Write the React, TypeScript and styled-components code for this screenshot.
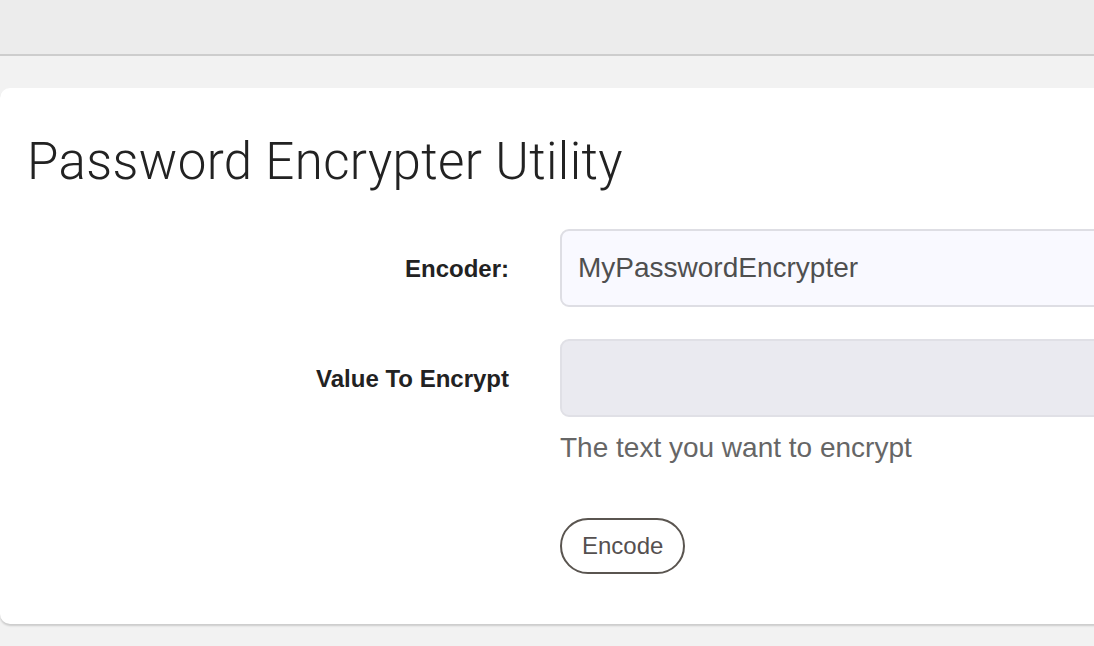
import React from "react";
import styled, { createGlobalStyle } from "styled-components";

const Global = createGlobalStyle`
  html, body { margin: 0; padding: 0; }
  body {
    background: #f2f2f2;
    font-family: "Liberation Sans", Arial, sans-serif;
    overflow: hidden;
    width: 1094px;
    height: 646px;
  }
`;

const TopBar = styled.header`
  height: 54px;
  background: #ececec;
  border-bottom: 2px solid #cdcdcd;
`;

const Main = styled.main`
  padding-top: 32px;
  overflow: hidden;
  padding-bottom: 6px;
`;

const Card = styled.section`
  width: 1200px;
  background: #ffffff;
  border-radius: 10px;
  box-shadow: 0 2px 2px rgba(0, 0, 0, 0.16);
  padding: 44px 0 50px 0;
  box-sizing: border-box;
`;

const Title = styled.h1`
  margin: 0 0 37px 27px;
  font-family: Roboto, "Liberation Sans", sans-serif;
  font-weight: 300;
  font-size: 51px;
  line-height: 60px;
  color: #222222;
  letter-spacing: 0.4px;
`;

const Form = styled.form`
  display: grid;
  grid-template-columns: 509px 1fr;
  column-gap: 51px;
  align-items: center;
`;

const Label = styled.label`
  justify-self: end;
  font-weight: 700;
  font-size: 24px;
  color: #222222;
  padding-top: 2px;
`;

const Input = styled.input<{ $muted?: boolean }>`
  box-sizing: border-box;
  height: 78px;
  width: 100%;
  border: 2px solid ${(p) => (p.$muted ? "#e0e0e6" : "#dedee4")};
  border-radius: 9px;
  background: ${(p) => (p.$muted ? "#eaeaf0" : "#f9f9ff")};
  padding: 0 16px;
  font-family: "Liberation Sans", Arial, sans-serif;
  font-size: 28px;
  color: #4f4f4f;
  outline: none;
`;

const RowGap = styled.div<{ $h: number }>`
  grid-column: 1 / -1;
  height: ${(p) => p.$h}px;
`;

const Help = styled.div`
  grid-column: 2;
  margin-top: 16px;
  font-size: 28px;
  color: #666666;
  line-height: 30px;
`;

const Button = styled.button`
  grid-column: 2;
  justify-self: start;
  margin-top: 55px;
  height: 56px;
  padding: 0 20px;
  border: 2px solid #5a5550;
  border-radius: 28px;
  background: #ffffff;
  font-family: "Liberation Sans", Arial, sans-serif;
  font-size: 24px;
  color: #555050;
  cursor: pointer;
`;

export default function App() {
  return (
    <>
      <Global />
      <TopBar />
      <Main>
        <Card>
          <Title>Password Encrypter Utility</Title>
          <Form onSubmit={(e) => e.preventDefault()}>
            <Label htmlFor="encoder">Encoder:</Label>
            <Input id="encoder" defaultValue="MyPasswordEncrypter" />
            <RowGap $h={32} />
            <Label htmlFor="value">Value To Encrypt</Label>
            <Input id="value" $muted />
            <Help>The text you want to encrypt</Help>
            <Button type="submit">Encode</Button>
          </Form>
        </Card>
      </Main>
    </>
  );
}
